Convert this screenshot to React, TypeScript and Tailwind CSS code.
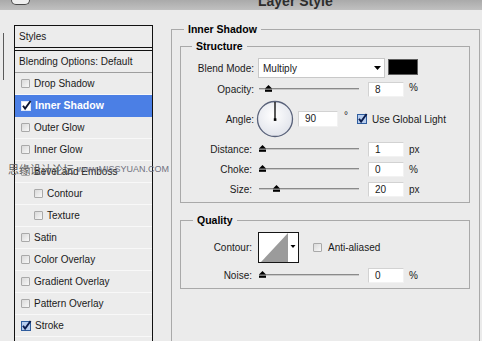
import React from "react";

function Unchecked() {
  return (
    <span className="block w-[9px] h-[9px] shrink-0 rounded-[1px] border border-[#a9a9a9] bg-linear-to-br from-[#d9d9d9] to-[#f8f8f8]" />
  );
}

function Checked({ white = false }: { white?: boolean }) {
  return (
    <svg width="10" height="10" viewBox="0 0 10 10" overflow="visible" className="block shrink-0">
      <rect
        x="0.5"
        y="0.5"
        width="9"
        height="9"
        fill={white ? "#ffffff" : "#b7cdee"}
        stroke={white ? "#dfe7f7" : "#2f5d9e"}
      />
      <path
        d="M2 4.8 L4.1 7.6 L9.6 0"
        fill="none"
        stroke={white ? "#0b1431" : "#0c1d4d"}
        strokeWidth="1.9"
      />
    </svg>
  );
}

function Slider({ thumb }: { thumb: number }) {
  return (
    <div className="relative ml-[5px] w-[100px] h-[20px] shrink-0">
      <div className="absolute left-0 right-0 top-[9px] h-[1px] bg-[#8a8a8a]" />
      <div className="absolute left-0 right-0 top-[10px] h-[1px] bg-[#c9c9c9]" />
      <svg
        className="absolute top-[6px]"
        style={{ left: thumb }}
        width="7"
        height="7"
        viewBox="0 0 7 7"
      >
        <path d="M3.5 0 L7 3.6 H0 Z" fill="#000" />
        <rect x="0" y="4.6" width="7" height="2.2" fill="#000" />
      </svg>
    </div>
  );
}

function NumBox({ v, w = "w-[36px]" }: { v: string; w?: string }) {
  return (
    <div
      className={
        "h-[15px] bg-white border border-[#d2d2d2] border-r-[#f2f2f2] border-b-[#f2f2f2] pl-[6px] leading-[13px] shrink-0 " +
        w
      }
    >
      {v}
    </div>
  );
}

function SliderRow({
  label,
  value,
  unit,
  thumb,
}: {
  label: string;
  value: string;
  unit: string;
  thumb: number;
}) {
  return (
    <div className="flex items-center h-[20px]">
      <span className="w-[73px] text-right shrink-0 pr-[2px]">{label}</span>
      <Slider thumb={thumb} />
      <div className="ml-[9px]">
        <NumBox v={value} />
      </div>
      <span className="ml-[5px]">{unit}</span>
    </div>
  );
}

const items: { label: string; sel?: boolean; checked?: boolean; indent?: boolean }[] = [
  { label: "Drop Shadow" },
  { label: "Inner Shadow", sel: true, checked: true },
  { label: "Outer Glow" },
  { label: "Inner Glow" },
  { label: "Bevel and Emboss" },
  { label: "Contour", indent: true },
  { label: "Texture", indent: true },
  { label: "Satin" },
  { label: "Color Overlay" },
  { label: "Gradient Overlay" },
  { label: "Pattern Overlay" },
  { label: "Stroke", checked: true },
  { label: "" },
];

export default function App() {
  return (
    <div className="relative w-[482px] h-[341px] overflow-hidden bg-[#ebebeb] text-[10px] text-[#1a1a1a] [font-family:'Liberation_Sans',Arial,sans-serif]">
      {/* title bar */}
      <div className="h-[10px] overflow-hidden bg-linear-to-b from-[#aaaaaa] to-[#c0c0c0] flex items-start">
        <div className="ml-[11px] w-[19px] h-[5px] rounded-b-[5px] border border-t-0 border-[#4a4a4a] bg-[#efefef] shrink-0" />
        <div className="ml-[228px] -mt-[6px] text-[14px] leading-[14px] font-bold text-[#2d2d2d] whitespace-nowrap">
          Layer Style
        </div>
      </div>

      <div className="flex items-start">
        <div className="ml-[3px] mt-[23px] w-px h-[47px] bg-[#5a5a5a] shrink-0" />

        {/* left styles panel */}
        <div className="ml-[10px] mt-[15px] w-[139px] h-[340px] border border-[#111] shrink-0 bg-[#ececec]">
          <div className="h-[22px] flex items-center pl-[4px] border-b border-[#111]">Styles</div>
          <div className="mt-[2px] border-t border-[#111]">
            <div className="h-[22px] flex items-center pl-[4px] border-b border-[#9e9e9e]">
              Blending Options: Default
            </div>
            {items.map((it, i) => (
              <div
                key={i}
                className={
                  "h-[22px] flex items-center gap-[4px] border-b " +
                  (it.indent ? "pl-[19px] " : "pl-[6px] ") +
                  (it.sel
                    ? "bg-[#4b7fe5] border-[#4b7fe5] text-white font-bold text-[10.5px]"
                    : "border-[#f8f8f8]")
                }
              >
                {it.label ? (
                  <>
                    {it.checked ? <Checked white={it.sel} /> : <Unchecked />}
                    <span className="whitespace-nowrap">{it.label}</span>
                  </>
                ) : null}
              </div>
            ))}
          </div>
        </div>

        {/* right settings */}
        <fieldset className="ml-[18px] mt-[13px] w-[309px] h-[340px] border border-[#a9a9a9] pl-[8px] pr-[9px] pt-[5px] shrink-0">
          <legend className="ml-[4px] px-[4px] font-bold text-[10.5px] leading-[12px] text-black">
            Inner Shadow
          </legend>

          <fieldset className="border border-[#a9a9a9] pt-[6px] pb-[3px]">
            <legend className="ml-[11px] px-[4px] font-bold text-[10.5px] leading-[12px] text-black">
              Structure
            </legend>

            <div className="flex items-center h-[20px]">
              <span className="w-[73px] text-right shrink-0">Blend Mode:</span>
              <div className="ml-[4px] flex items-center w-[127px] h-[20px] bg-white border border-[#c8c8c8] pl-[4px] pr-[3px] shrink-0">
                <span className="flex-1">Multiply</span>
                <svg width="7" height="4" viewBox="0 0 7 4">
                  <path d="M0 0H7L3.5 4Z" fill="#000" />
                </svg>
              </div>
              <div className="ml-[3px] mb-[2px] w-[30px] h-[16px] bg-black border border-[#5e5e5e] shrink-0" />
            </div>

            <div className="mt-[1px]">
              <div className="flex items-center h-[20px]">
                <span className="w-[73px] text-right shrink-0">Opacity:</span>
                <Slider thumb={6} />
                <div className="ml-[9px]">
                  <NumBox v="8" />
                </div>
                <span className="ml-[5px] -mt-[3px]">%</span>
              </div>
            </div>

            <div className="flex items-center h-[40px]">
              <span className="w-[73px] text-right shrink-0">Angle:</span>
              <svg className="ml-[2px] shrink-0" width="38" height="38" viewBox="0 0 38 38">
                <defs>
                  <radialGradient id="dialg" cx="45%" cy="40%" r="65%">
                    <stop offset="0" stopColor="#ffffff" />
                    <stop offset="1" stopColor="#dfe2ea" />
                  </radialGradient>
                </defs>
                <circle cx="19" cy="19" r="17.5" fill="url(#dialg)" stroke="#59627a" strokeWidth="1.3" />
                <line x1="19" y1="19.5" x2="19" y2="2" stroke="#000" strokeWidth="1.3" />
                <rect x="17.8" y="18.3" width="2.6" height="2.6" fill="#000" />
              </svg>
              <div className="ml-[4px]">
                <NumBox v="90" w="w-[40px] h-[16px]" />
              </div>
              <span className="ml-[6px] -mt-[7px]">°</span>
              <div className="ml-[9px]">
                <Checked />
              </div>
              <span className="ml-[5px] whitespace-nowrap">Use Global Light</span>
            </div>

            <SliderRow label="Distance:" value="1" unit="px" thumb={0} />
            <SliderRow label="Choke:" value="0" unit="%" thumb={0} />
            <SliderRow label="Size:" value="20" unit="px" thumb={14} />
          </fieldset>

          <fieldset className="mt-[11px] border border-[#a9a9a9] pt-[6px] pb-[3px]">
            <legend className="ml-[12px] px-[4px] font-bold text-[10.5px] leading-[12px] text-black">
              Quality
            </legend>

            <div className="flex items-center h-[30px]">
              <span className="w-[73px] text-right shrink-0 pr-[2px]">Contour:</span>
              <svg className="ml-[4px] shrink-0" width="41" height="31" viewBox="0 0 41 31">
                <rect x="0.5" y="0.5" width="40" height="30" fill="#ffffff" stroke="#151515" />
                <path d="M3 30 L30 1 L30 30 Z" fill="#9b9b9b" />
                <path d="M32.5 13 H37.5 L35 16 Z" fill="#000" />
              </svg>
              <div className="ml-[14px]">
                <Unchecked />
              </div>
              <span className="ml-[6px] whitespace-nowrap">Anti-aliased</span>
            </div>

            <div className="mt-[3px]">
              <SliderRow label="Noise:" value="0" unit="%" thumb={0} />
            </div>
          </fieldset>
        </fieldset>
      </div>

      {/* watermark overlay */}
      <div className="absolute left-[8px] top-[162px] flex items-center whitespace-nowrap text-[#5f5f5f]">
        <span className="text-[11px] leading-[14px] [font-family:'Noto_Sans_CJK_SC','Liberation_Sans',sans-serif]">
          思缘设计论坛
        </span>
        <span className="ml-[3px] text-[9px] leading-[14px] text-[#70727f]">www.MISSYUAN.COM</span>
      </div>
    </div>
  );
}
